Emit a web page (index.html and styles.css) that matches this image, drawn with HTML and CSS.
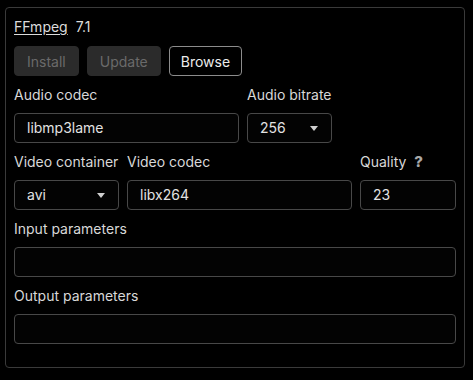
FILE: index.html
```html
<!DOCTYPE html>
<html>
<head>
<meta charset="utf-8">
<link rel="stylesheet" href="styles.css">
</head>
<body>
<div class="panel">
  <div class="header"><a class="link">FFmpeg</a><span class="ver">7.1</span></div>
  <div class="buttons">
    <button class="btn disabled">Install</button>
    <button class="btn disabled">Update</button>
    <button class="btn outline">Browse</button>
  </div>
  <div class="grid audio">
    <label class="lbl">Audio codec</label>
    <label class="lbl">Audio bitrate</label>
    <div class="field">libmp3lame</div>
    <div class="field select">256<span class="caret"></span></div>
  </div>
  <div class="grid video">
    <label class="lbl">Video container</label>
    <label class="lbl">Video codec</label>
    <label class="lbl">Quality <span class="help">?</span></label>
    <div class="field select">avi<span class="caret"></span></div>
    <div class="field">libx264</div>
    <div class="field">23</div>
  </div>
  <label class="lbl">Input parameters</label>
  <div class="field"></div>
  <label class="lbl">Output parameters</label>
  <div class="field"></div>
</div>
</body>
</html>
```
FILE: styles.css
```css
html, body {
  margin: 0;
  background: #000;
}
body {
  padding: 7px 8px 0 5px;
  font-family: Inter, "Noto Sans", sans-serif;
  font-size: 14px;
  color: #dcdcdc;
}
.panel {
  width: 442px;
  border: 1px solid #3a3a3a;
  border-radius: 4px;
  padding: 8px 8px 23px 8px;
  display: flex;
  flex-direction: column;
  gap: 8px;
}
.header {
  height: 22px;
  line-height: 22px;
  display: flex;
  gap: 8px;
  font-size: 14px;
}
.link {
  text-decoration: underline;
  text-underline-offset: 2px;
  color: #dcdcdc;
}
.buttons {
  display: flex;
  gap: 8px;
}
.btn {
  height: 30px;
  padding: 0 12px;
  border-radius: 4px;
  font-family: inherit;
  font-size: 14px;
}
.btn.disabled {
  background: #2b2b2b;
  border: 1px solid #2b2b2b;
  color: #6a6a6a;
}
.btn.outline {
  background: #000;
  border: 1px solid #8c8c8c;
  color: #ececec;
  padding: 0 11px;
}
.grid {
  display: grid;
  column-gap: 8px;
  row-gap: 8px;
}
.audio {
  grid-template-columns: 225px 85px;
}
.video {
  grid-template-columns: 105px 225px 96px;
}
.lbl {
  display: block;
  height: 21px;
  line-height: 21px;
  color: #d8d8d8;
  white-space: nowrap;
}
.help {
  font-weight: 800;
  font-size: 15px;
  color: #a8a8a8;
  margin-left: 4px;
}
.field {
  height: 28px;
  line-height: 28px;
  border: 1px solid #484848;
  border-radius: 4px;
  background: #030303;
  padding: 0 12px;
  color: #e2e2e2;
  position: relative;
}
.select .caret {
  position: absolute;
  right: 13px;
  top: 12px;
  width: 0;
  height: 0;
  border-left: 4px solid transparent;
  border-right: 4px solid transparent;
  border-top: 5px solid #cfcfcf;
}
```
